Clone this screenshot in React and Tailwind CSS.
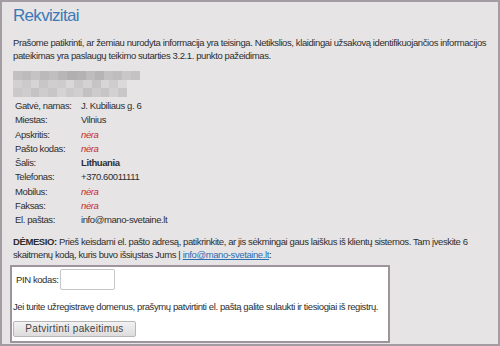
import React from 'react'

const rows = [
  { label: 'Gatvė, namas:', value: 'J. Kubiliaus g. 6' },
  { label: 'Miestas:', value: 'Vilnius' },
  { label: 'Apskritis:', value: null },
  { label: 'Pašto kodas:', value: null },
  { label: 'Šalis:', value: 'Lithuania', bold: true },
  { label: 'Telefonas:', value: '+370.60011111' },
  { label: 'Mobilus:', value: null },
  { label: 'Faksas:', value: null },
  { label: 'El. paštas:', value: 'info@mano-svetaine.lt' },
]

// pixelated (censored) block above the table
const blurRows = [
  { h: 'h-[9px]', w: 'w-[127px]', cells: ['#c3c0c2', '#bebbbd', '#c6c3c5', '#bcb9bb', '#c1bec0', '#b9b6b8', '#b2afb1', '#b5b2b4', '#bfbcbe', '#b7b4b6', '#c4c1c3', '#c0bdbf', '#cac7c9', '#c5c2c4'] },
  { h: 'h-[8px]', w: 'w-[114px]', cells: ['#d3d0d2', '#cdcacc', '#d7d4d6', '#c9c6c8', '#d1ced0', '#cfcccd', '#dad7d9', '#ccc9cb', '#d5d2d4', '#c7c4c6', '#d8d5d7', '#d0cdcf', '#dcd9db'] },
  { h: 'h-[9px]', w: 'w-[114px]', cells: ['#cbc8ca', '#d0cdcf', '#c6c3c5', '#cfcccd', '#c9c6c8', '#d6d3d5', '#cdcacc', '#d2cfd1', '#c4c1c3', '#cecbcd', '#c8c5c7', '#d4d1d3', '#cac7c9'] },
]

function Censored() {
  return (
    <div className="flex flex-col">
      {blurRows.map((r, i) => (
        <div key={i} className={`flex ${r.h} ${r.w}`}>
          {r.cells.map((c, j) => <div key={j} className="flex-1" style={{ background: c }} />)}
        </div>
      ))}
    </div>
  )
}

export default function App() {
  return (
    <div className="w-[500px] h-[346px] bg-[#e6e4e5] border-2 border-[#a39ca2] font-['Liberation_Sans',Arial,sans-serif] text-[9.5px] tracking-[-0.4px] text-[#2e2e2e] pl-[8px] pr-[6px] overflow-hidden">
      <h1 className="pl-[3px] pt-[5px] mb-[12px] text-[17px] leading-none tracking-[-0.7px] text-[#3b79b6]">Rekvizitai</h1>
      <p className="pl-[3px] leading-[13px]">
        Prašome patikrinti, ar žemiau nurodyta informacija yra teisinga. Netikslios, klaidingai užsakovą identifikuojančios informacijos pateikimas yra paslaugų teikimo sutarties 3.2.1. punkto pažeidimas.
      </p>
      <div className="pl-[3px] mt-[9px]">
        <Censored />
      </div>
      <div className="mt-[2px] pl-[5px] flex flex-col">
        {rows.map((r) => (
          <div key={r.label} className="flex h-[14.25px] items-center">
            <span className="w-[66px]">{r.label}</span>
            {r.value ? (
              <span className={r.bold ? 'font-bold' : ''}>{r.value}</span>
            ) : (
              <span className="italic text-[#c42a2e]">nėra</span>
            )}
          </div>
        ))}
      </div>
      <p className="pl-[3px] mt-[8px] leading-[13px]">
        <b>DĖMESIO:</b> Prieš keisdami el. pašto adresą, patikrinkite, ar jis sėkmingai gaus laiškus iš klientų sistemos. Tam įveskite 6 skaitmenų kodą, kuris buvo išsiųstas Jums | <a className="text-[#2a6fb4] underline">info@mano-svetaine.lt</a>:
      </p>
      <div className="mt-[4px] w-[380px] bg-white border-2 border-[#9d959b] pl-[1px] pt-[2px] pb-[4px]">
        <div className="flex items-center gap-[2px] pl-[3px]">
          <span>PIN kodas:</span>
          <div className="w-[55px] h-[21px] border border-[#c6c6c6] rounded-[2px] bg-white" />
        </div>
        <p className="mt-[10px] leading-[13px] whitespace-nowrap">Jei turite užregistravę domenus, prašymų patvirtinti el. paštą galite sulaukti ir tiesiogiai iš registrų.</p>
        <button className="mt-[8px] w-[123px] h-[16px] flex items-center justify-center border border-[#b9b6b8] rounded-[2px] bg-gradient-to-b from-[#f3f2f2] to-[#dddbdc] text-[10px] leading-none tracking-[0.3px] text-[#444]">
          Patvirtinti pakeitimus
        </button>
      </div>
    </div>
  )
}
